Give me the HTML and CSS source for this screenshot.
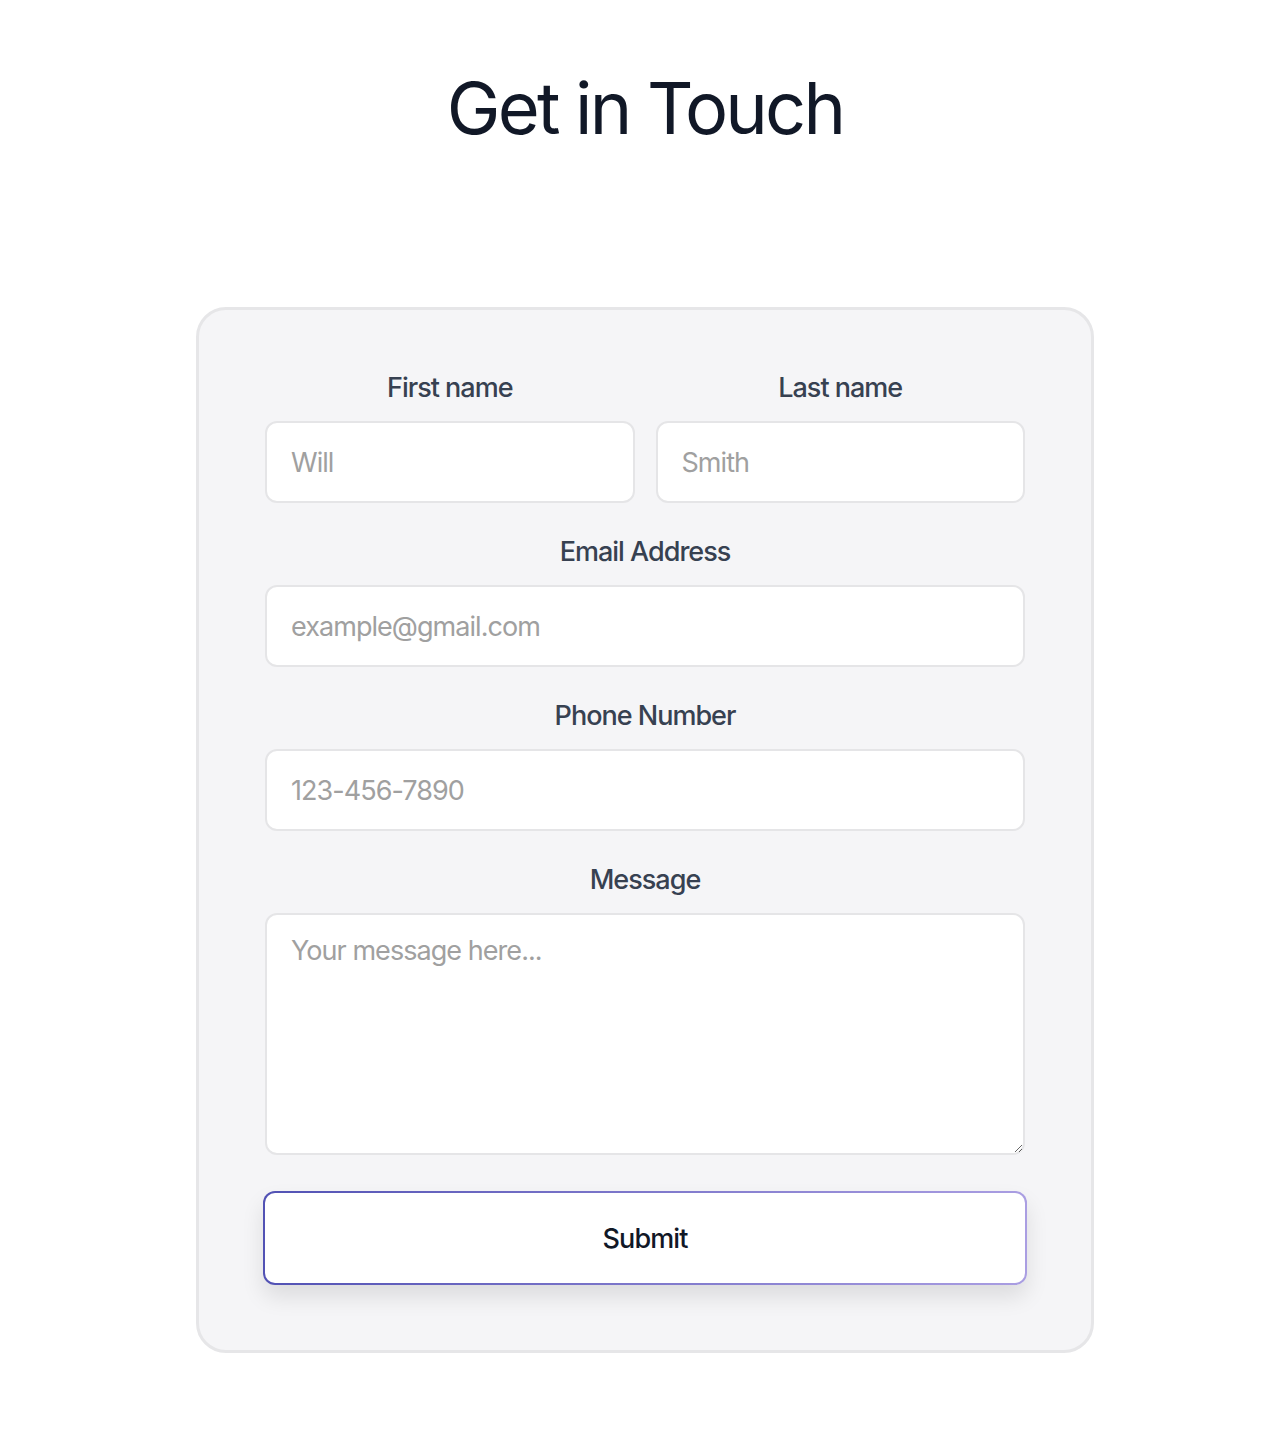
FILE: index.html
```html
<!DOCTYPE html>
<html lang="en">
<head>
<meta charset="utf-8">
<title>Get in Touch</title>
<link rel="stylesheet" href="styles.css">
</head>
<body>
<main class="page">
  <h1 class="title">Get in Touch</h1>
  <form class="card">
    <div class="row">
      <div class="field">
        <label class="label" for="first">First name</label>
        <input class="input" id="first" type="text" placeholder="Will">
      </div>
      <div class="field">
        <label class="label" for="last">Last name</label>
        <input class="input" id="last" type="text" placeholder="Smith">
      </div>
    </div>
    <div class="field">
      <label class="label" for="email">Email Address</label>
      <input class="input" id="email" type="email" placeholder="example@gmail.com">
    </div>
    <div class="field">
      <label class="label" for="phone">Phone Number</label>
      <input class="input" id="phone" type="tel" placeholder="123-456-7890">
    </div>
    <div class="field">
      <label class="label" for="msg">Message</label>
      <textarea class="input textarea" id="msg" placeholder="Your message here..."></textarea>
    </div>
    <button class="submit" type="button">Submit</button>
  </form>
</main>
</body>
</html>
```
FILE: styles.css
```css
* { box-sizing: border-box; }
html, body { margin: 0; padding: 0; background: #ffffff; }
body { font-family: Inter, "Noto Sans", sans-serif; color: #111827; }
.page {
  padding: 0 0 0 8px;
  display: flex;
  flex-direction: column;
  align-items: center;
}
.title {
  margin: 64px 0 0 0;
  font-size: 72px;
  line-height: 88px;
  font-weight: 400;
  color: #111827;
  letter-spacing: -2.8px;
}
.card {
  margin-top: 155px;
  width: 898px;
  background: #f5f5f7;
  border: 3px solid #e6e6e8;
  border-radius: 30px;
  padding: 60px 66px 65px 66px;
  display: flex;
  flex-direction: column;
  gap: 31px;
}
.row {
  display: flex;
  gap: 21px;
}
.row .field { flex: 1; }
.field {
  display: flex;
  flex-direction: column;
  gap: 15px;
}
.label {
  text-align: center;
  font-size: 27px;
  line-height: 36px;
  font-weight: 500;
  color: #374151;
  letter-spacing: -1px;
}
.input {
  height: 82px;
  width: 100%;
  border: 2px solid #e5e5e7;
  border-radius: 12px;
  background: #ffffff;
  padding: 0 24px;
  font-family: Inter, "Noto Sans", sans-serif;
  font-size: 27px;
  color: #111827;
  outline: none;
  letter-spacing: -0.95px;
}
.input::placeholder { color: #a0a0a0; }
.textarea {
  height: 242px;
  padding: 18px 24px;
  line-height: 36px;
  resize: vertical;
  display: block;
}
.submit {
  margin: 5px -2px 0 -2px;
  height: 94px;
  border: 2px solid transparent;
  border-radius: 12px;
  background: linear-gradient(#ffffff, #ffffff) padding-box,
              linear-gradient(90deg, #5252b4, #aa9ee2) border-box;
  box-shadow: 0 12px 22px rgba(0, 0, 0, 0.10);
  font-family: Inter, "Noto Sans", sans-serif;
  font-size: 27px;
  font-weight: 500;
  color: #111827;
  letter-spacing: -0.9px;
  cursor: pointer;
}
```
